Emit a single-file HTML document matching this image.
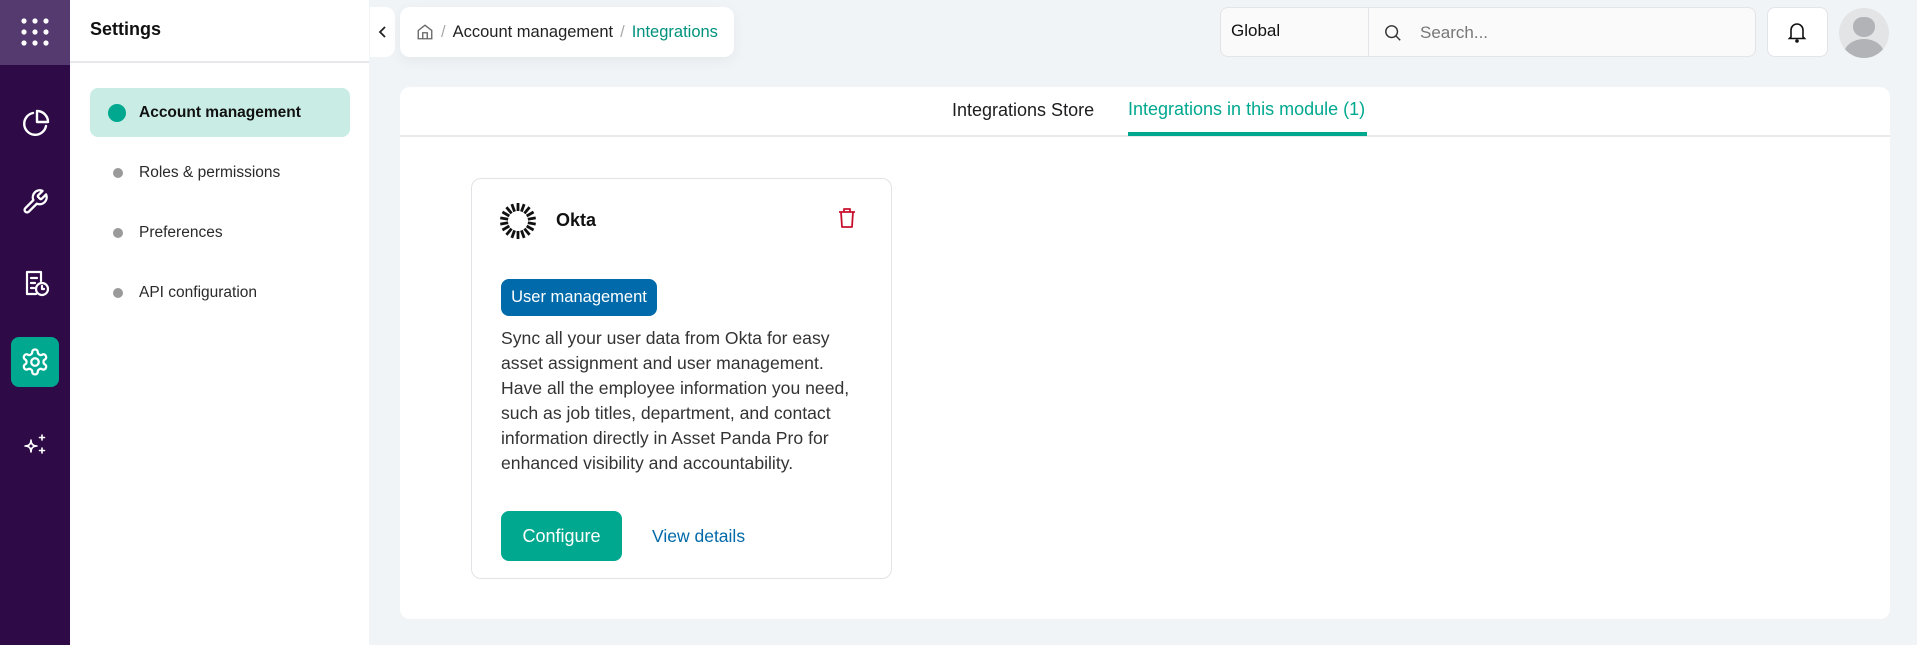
<!DOCTYPE html>
<html><head><meta charset="utf-8"><style>
*{box-sizing:border-box;margin:0;padding:0}
body{width:1917px;height:645px;background:#f1f4f7;font-family:"Liberation Sans",sans-serif;position:relative;overflow:hidden;color:#1d1d1f}
.abs{position:absolute}
.side{left:0;top:0;width:70px;height:645px;background:#2e0a47}
.sidetop{left:0;top:0;width:70px;height:65px;background:#553a6f}
.panel{left:70px;top:0;width:299px;height:645px;background:#fff}
.item{left:90px;width:260px;height:49px;border-radius:8px;font-size:15.5px;color:#2a2a2a;display:flex;align-items:center;padding-left:49px}
.item i{position:absolute;left:23px;top:20px;width:10px;height:10px;border-radius:50%;background:#9a9a9a}
.card{background:#fff;border-radius:10px}
.txt{font-size:17.6px;line-height:25px;color:#333;white-space:nowrap}
</style></head><body>
<div class="abs side"></div>
<div class="abs sidetop"></div>
<svg class="abs" style="left:20px;top:17px" width="30" height="30" viewBox="0 0 30 30" fill="#fff">
<circle cx="4" cy="4" r="2.6"/><circle cx="15" cy="4" r="2.6"/><circle cx="26" cy="4" r="2.6"/>
<circle cx="4" cy="15" r="2.6"/><circle cx="15" cy="15" r="2.6"/><circle cx="26" cy="15" r="2.6"/>
<circle cx="4" cy="26" r="2.6"/><circle cx="15" cy="26" r="2.6"/><circle cx="26" cy="26" r="2.6"/></svg>
<svg class="abs" style="left:20px;top:108px" width="30" height="30" viewBox="0 0 30 30" fill="none" stroke="#fff" stroke-width="2.4" stroke-linecap="round" stroke-linejoin="round"><path d="M13 5A11 11 0 1 0 26 18"/><path d="M17 3v11h11A11 11 0 0 0 17 3z"/></svg>
<svg class="abs" style="left:21px;top:188px" width="28" height="28" viewBox="0 0 24 24" fill="none" stroke="#fff" stroke-width="2" stroke-linecap="round" stroke-linejoin="round"><path d="M14.7 6.3a1 1 0 0 0 0 1.4l1.6 1.6a1 1 0 0 0 1.4 0l3.8-3.8a6 6 0 0 1-7.9 7.9l-6.9 6.9a2.1 2.1 0 0 1-3-3l6.9-6.9a6 6 0 0 1 7.9-7.9z"/></svg>
<svg class="abs" style="left:21px;top:268px" width="30" height="30" viewBox="0 0 30 30" fill="none" stroke="#fff" stroke-width="2.2" stroke-linecap="round" stroke-linejoin="round"><path d="M15 26H6V4h14v9"/><path d="M10 10h6M10 15h4M10 20h3"/><circle cx="21" cy="21" r="6"/><path d="M21 18v3h2"/></svg>
<div class="abs" style="left:11px;top:337px;width:48px;height:50px;border-radius:8px;background:#00a88f"></div>
<svg class="abs" style="left:20px;top:347px" width="30" height="30" viewBox="0 0 24 24" fill="none" stroke="#fff" stroke-width="1.8" stroke-linecap="round" stroke-linejoin="round"><path d="M12.2 2h-.4a2 2 0 0 0-2 2v.2a2 2 0 0 1-1 1.7l-.4.3a2 2 0 0 1-2 0l-.2-.1a2 2 0 0 0-2.7.7l-.2.4a2 2 0 0 0 .7 2.7l.2.1a2 2 0 0 1 1 1.7v.5a2 2 0 0 1-1 1.7l-.2.1a2 2 0 0 0-.7 2.7l.2.4a2 2 0 0 0 2.7.7l.2-.1a2 2 0 0 1 2 0l.4.3a2 2 0 0 1 1 1.7v.2a2 2 0 0 0 2 2h.4a2 2 0 0 0 2-2v-.2a2 2 0 0 1 1-1.7l.4-.3a2 2 0 0 1 2 0l.2.1a2 2 0 0 0 2.7-.7l.2-.4a2 2 0 0 0-.7-2.7l-.2-.1a2 2 0 0 1-1-1.7v-.5a2 2 0 0 1 1-1.7l.2-.1a2 2 0 0 0 .7-2.7l-.2-.4a2 2 0 0 0-2.7-.7l-.2.1a2 2 0 0 1-2 0l-.4-.3a2 2 0 0 1-1-1.7V4a2 2 0 0 0-2-2z"/><circle cx="12" cy="12" r="3"/></svg>
<svg class="abs" style="left:22px;top:432px" width="26" height="26" viewBox="0 0 26 26" fill="none" stroke="#fff" stroke-width="1.6" stroke-linejoin="round"><path d="M9 8c0 4-2 6-6 6 4 0 6 2 6 6 0-4 2-6 6-6-4 0-6-2-6-6z"/><path d="M20 3v5M17.5 5.5h5M20 16v5M17.5 18.5h5" stroke-linecap="round"/></svg>

<div class="abs panel"></div>
<div class="abs" style="left:90px;top:19px;font-size:18px;font-weight:bold;color:#111">Settings</div>
<div class="abs" style="left:70px;top:61px;width:299px;height:2px;background:#e6e8eb"></div>
<div class="abs item" style="top:88px;background:#c9ede5;font-weight:bold;color:#111;font-size:15.5px"><i style="background:#00a88f;width:18px;height:18px;left:18px;top:16px"></i>Account management</div>
<div class="abs item" style="top:148px"><i></i>Roles &amp; permissions</div>
<div class="abs item" style="top:208px"><i></i>Preferences</div>
<div class="abs item" style="top:268px"><i></i>API configuration</div>

<div class="abs card" style="left:370px;top:7px;width:25px;height:50px;border-radius:0 10px 10px 0"></div>
<svg class="abs" style="left:378px;top:25px" width="10" height="14" viewBox="0 0 10 14" fill="none" stroke="#222" stroke-width="1.8"><path d="M7 2L2 7l5 5"/></svg>
<div class="abs card" style="left:400px;top:7px;width:334px;height:50px;box-shadow:0 4px 14px rgba(0,0,0,.05);font-size:16.5px;display:flex;align-items:center;padding-left:16px;color:#222">
<svg width="18" height="18" viewBox="0 0 24 24" fill="none" stroke="#666" stroke-width="1.8"><path d="M3 10l9-7 9 7v11H3z"/><path d="M9 21v-8h6v8"/></svg>
<span style="color:#aaa;margin:0 7px">/</span>Account management<span style="color:#aaa;margin:0 7px">/</span><span style="color:#00927d">Integrations</span></div>

<div class="abs" style="left:1220px;top:7px;width:536px;height:50px;border:1px solid #e2e4e7;border-radius:8px;background:#fafafa"></div>
<div class="abs" style="left:1368px;top:8px;width:1px;height:48px;background:#e2e4e7"></div>
<div class="abs" style="left:1231px;top:21px;font-size:17px;color:#111">Global</div>
<svg class="abs" style="left:1384px;top:24px" width="18" height="18" viewBox="0 0 20 20" fill="none" stroke="#333" stroke-width="1.6"><circle cx="8.5" cy="8.5" r="6.5"/><path d="M13.5 13.5L18 18"/></svg>
<div class="abs" style="left:1420px;top:23px;font-size:17px;color:#777">Search...</div>
<div class="abs card" style="left:1767px;top:7px;width:61px;height:50px;border:1px solid #e2e4e7;border-radius:8px"></div>
<svg class="abs" style="left:1787px;top:21px" width="20" height="22" viewBox="0 0 20 22" fill="none" stroke="#111" stroke-width="1.6"><path d="M4 16V9a6 6 0 0 1 12 0v7l1.5 1.5h-15z"/><circle cx="10" cy="20" r="1" fill="#111"/></svg>
<div class="abs" style="left:1839px;top:8px;width:50px;height:50px;border-radius:50%;background:#e3e4e6;overflow:hidden">
<div class="abs" style="left:14px;top:9px;width:22px;height:20px;border-radius:45% 45% 50% 50%;background:#b1b3b6"></div>
<div class="abs" style="left:5px;top:31px;width:40px;height:30px;border-radius:50%;background:#b1b3b6"></div></div>

<div class="abs card" style="left:400px;top:87px;width:1490px;height:532px"></div>
<div class="abs" style="left:400px;top:135px;width:1490px;height:2px;background:#e8e9eb"></div>
<div class="abs" style="left:952px;top:100px;font-size:18px;color:#1d1d1f">Integrations Store</div>
<div class="abs" style="left:1128px;top:99px;font-size:18px;color:#00a88f">Integrations in this module (1)</div>
<div class="abs" style="left:1128px;top:132px;width:239px;height:4px;background:#00a88f"></div>

<div class="abs" style="left:471px;top:178px;width:421px;height:401px;border:1px solid #e1e3e6;border-radius:10px;background:#fff"></div>
<svg class="abs" style="left:499px;top:202px" width="38" height="38" viewBox="-19 -19 38 38" stroke="#111" stroke-width="2.8" stroke-linecap="butt">
<g id="r"><path d="M0-10V-18"/></g>
<use href="#r" transform="rotate(20)"/><use href="#r" transform="rotate(40)"/><use href="#r" transform="rotate(60)"/><use href="#r" transform="rotate(80)"/><use href="#r" transform="rotate(100)"/><use href="#r" transform="rotate(120)"/><use href="#r" transform="rotate(140)"/><use href="#r" transform="rotate(160)"/><use href="#r" transform="rotate(180)"/><use href="#r" transform="rotate(200)"/><use href="#r" transform="rotate(220)"/><use href="#r" transform="rotate(240)"/><use href="#r" transform="rotate(260)"/><use href="#r" transform="rotate(280)"/><use href="#r" transform="rotate(300)"/><use href="#r" transform="rotate(320)"/><use href="#r" transform="rotate(340)"/></svg>
<div class="abs" style="left:556px;top:210px;font-size:18px;font-weight:bold;color:#111">Okta</div>
<svg class="abs" style="left:837px;top:207px" width="20" height="22" viewBox="0 0 20 22" fill="none" stroke="#c8102e" stroke-width="1.8" stroke-linejoin="round"><path d="M2 5h16M7 5V2h6v3M4 5l1 15h10l1-15"/></svg>
<div class="abs" style="left:501px;top:279px;width:156px;height:37px;border-radius:8px;background:#006aaa;color:#fff;font-size:16.5px;display:flex;align-items:center;justify-content:center">User management</div>
<div class="abs txt" style="left:501px;top:326px">Sync all your user data from Okta for easy<br>asset assignment and user management.<br>Have all the employee information you need,<br>such as job titles, department, and contact<br>information directly in Asset Panda Pro for<br>enhanced visibility and accountability.</div>
<div class="abs" style="left:501px;top:511px;width:121px;height:50px;border-radius:8px;background:#00a88f;color:#fff;font-size:18px;display:flex;align-items:center;justify-content:center">Configure</div>
<div class="abs" style="left:652px;top:526px;font-size:17.5px;color:#0069a8">View details</div>
</body></html>
